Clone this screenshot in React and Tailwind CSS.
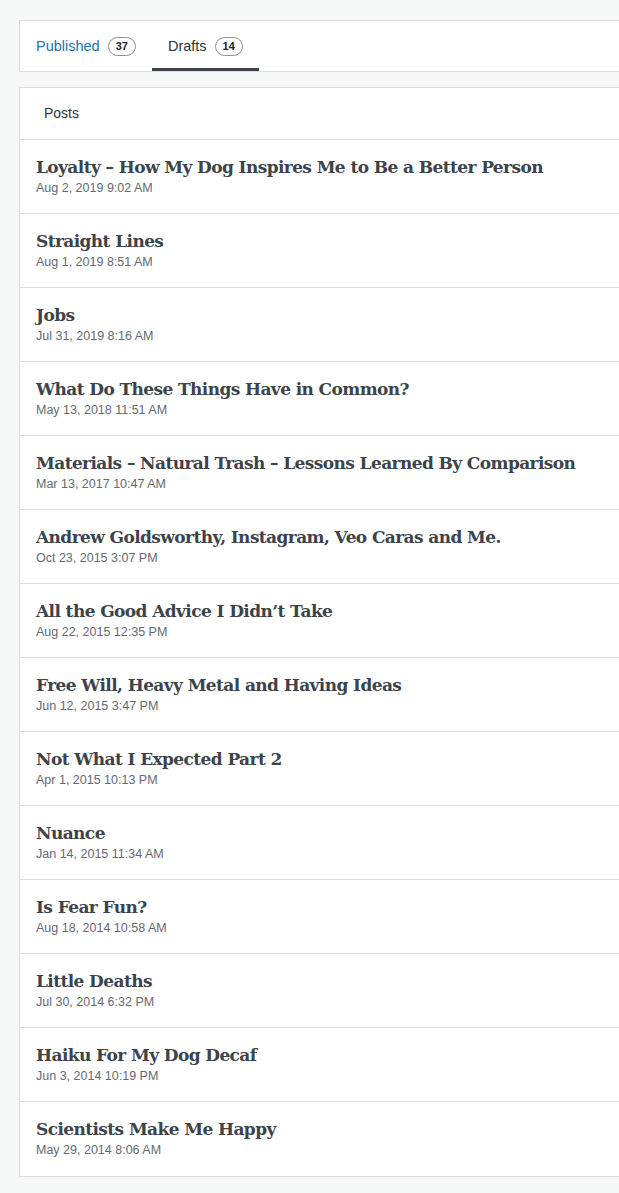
const posts = [
  ['Loyalty – How My Dog Inspires Me to Be a Better Person', 'Aug 2, 2019 9:02 AM'],
  ['Straight Lines', 'Aug 1, 2019 8:51 AM'],
  ['Jobs', 'Jul 31, 2019 8:16 AM'],
  ['What Do These Things Have in Common?', 'May 13, 2018 11:51 AM'],
  ['Materials – Natural Trash – Lessons Learned By Comparison', 'Mar 13, 2017 10:47 AM'],
  ['Andrew Goldsworthy, Instagram, Veo Caras and Me.', 'Oct 23, 2015 3:07 PM'],
  ['All the Good Advice I Didn’t Take', 'Aug 22, 2015 12:35 PM'],
  ['Free Will, Heavy Metal and Having Ideas', 'Jun 12, 2015 3:47 PM'],
  ['Not What I Expected Part 2', 'Apr 1, 2015 10:13 PM'],
  ['Nuance', 'Jan 14, 2015 11:34 AM'],
  ['Is Fear Fun?', 'Aug 18, 2014 10:58 AM'],
  ['Little Deaths', 'Jul 30, 2014 6:32 PM'],
  ['Haiku For My Dog Decaf', 'Jun 3, 2014 10:19 PM'],
  ['Scientists Make Me Happy', 'May 29, 2014 8:06 AM'],
];

function Tab({ label, count, active }) {
  return (
    <div
      className={`flex items-center gap-[8px] px-4 h-full border-b-[3px] ${
        active ? 'border-[#3c434a] text-[#2c3338]' : 'border-transparent text-[#2271b1]'
      }`}
    >
      <span className="text-[14.5px] pt-[4px]">{label}</span>
      <span className="mt-[4px] flex items-center justify-center h-[19px] px-[7px] rounded-full border border-[#8c8f94] text-[11px] font-bold text-[#1d2327]">
        {count}
      </span>
    </div>
  );
}

export default function App() {
  return (
    <div className="min-h-[1193px] bg-[#f6f7f7] pt-5 pl-[19px] font-['Liberation_Sans',Arial,sans-serif]">
      {/* Tabs */}
      <div className="h-[52px] bg-white border-y border-l border-[#dcdcde] flex">
        <Tab label="Published" count="37" />
        <Tab label="Drafts" count="14" active />
      </div>

      {/* Posts list */}
      <div className="mt-[15px] bg-white border-y border-l border-[#dcdcde]">
        <div className="h-[52px] flex items-center px-6 text-[14px] text-[#2c3338] border-b border-[#dcdcde]">
          Posts
        </div>
        {posts.map(([title, date], i) => (
          <div
            key={title}
            className={`h-[74px] px-4 pb-[2px] flex flex-col justify-center ${
              i < posts.length - 1 ? 'border-b border-[#dcdcde]' : ''
            }`}
          >
            <div className="font-['DejaVu_Serif',serif] font-bold text-[17px] leading-[22px] text-[#3c434a] whitespace-nowrap tracking-[-0.6px]">
              {title}
            </div>
            <div className="mt-[2px] text-[12.5px] leading-[16px] text-[#646970]">{date}</div>
          </div>
        ))}
      </div>
    </div>
  );
}
